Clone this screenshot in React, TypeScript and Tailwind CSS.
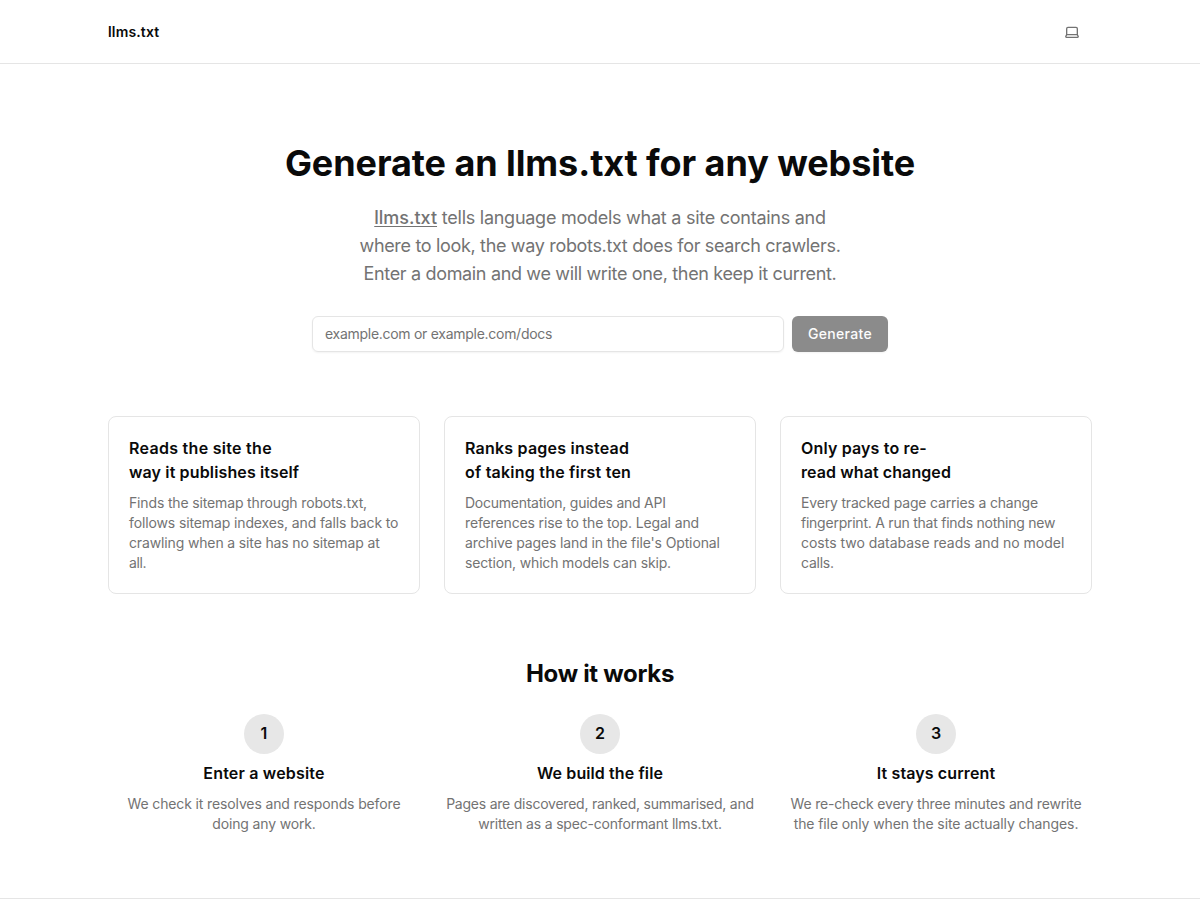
import { Laptop } from 'lucide-react'

const features = [
  {
    title: [
      { text: 'Reads the site the', className: 'tracking-[0.29px]' },
      { text: 'way it publishes itself', className: 'tracking-[0.14px]' },
    ],
    body: [
      { text: 'Finds the sitemap through robots.txt,', className: 'tracking-[-0.15px]' },
      { text: 'follows sitemap indexes, and falls back to', className: 'tracking-[-0.12px]' },
      { text: 'crawling when a site has no sitemap at', className: 'tracking-[-0.14px]' },
      { text: 'all.', className: 'tracking-[-0.4px]' },
    ],
  },
  {
    title: [
      { text: 'Ranks pages instead', className: 'tracking-[0.22px]' },
      { text: 'of taking the first ten', className: 'tracking-[0.22px]' },
    ],
    body: [
      { text: 'Documentation, guides and API', className: 'tracking-[-0.25px]' },
      { text: 'references rise to the top. Legal and', className: 'tracking-[-0.14px]' },
      { text: "archive pages land in the file's Optional", className: 'tracking-[-0.13px]' },
      { text: 'section, which models can skip.', className: 'tracking-[-0.16px]' },
    ],
  },
  {
    title: [
      { text: 'Only pays to re-', className: 'tracking-[0.16px]' },
      { text: 'read what changed', className: 'tracking-[0.09px]' },
    ],
    body: [
      { text: 'Every tracked page carries a change', className: 'tracking-[-0.18px]' },
      { text: 'fingerprint. A run that finds nothing new', className: 'tracking-[-0.24px]' },
      { text: 'costs two database reads and no model', className: 'tracking-[-0.02px]' },
      { text: 'calls.', className: 'tracking-[-0.25px]' },
    ],
  },
]

const steps = [
  {
    title: { text: 'Enter a website', className: 'tracking-[0.18px]' },
    body: [
      { text: 'We check it resolves and responds before', className: 'tracking-[-0.13px]' },
      { text: 'doing any work.', className: 'tracking-[-0.15px]' },
    ],
  },
  {
    title: { text: 'We build the file', className: 'tracking-[0.1px]' },
    body: [
      { text: 'Pages are discovered, ranked, summarised, and', className: 'tracking-[-0.23px]' },
      { text: 'written as a spec-conformant llms.txt.', className: 'tracking-[-0.19px]' },
    ],
  },
  {
    title: { text: 'It stays current', className: 'tracking-[0.12px]' },
    body: [
      { text: 'We re-check every three minutes and rewrite', className: 'tracking-[-0.18px]' },
      { text: 'the file only when the site actually changes.', className: 'tracking-[-0.1px]' },
    ],
  },
]

type Line = { text: string; className: string }

function Lines({ lines }: { lines: Line[] }) {
  return (
    <>
      {lines.map((line) => (
        <span key={line.text} className={`block whitespace-nowrap ${line.className}`}>
          {line.text}
        </span>
      ))}
    </>
  )
}

export default function App() {
  return (
    <div className="h-[900px] overflow-hidden bg-white font-['Inter',sans-serif] text-[#0a0a0a]">
      <header className="h-16 border-b border-[#e5e5e5]">
        <div className="mx-auto flex h-full max-w-[984px] items-center justify-between">
          <a href="#" className="text-sm font-semibold tracking-[0.15px]">
            llms.txt
          </a>
          <button className="flex h-8 w-10 items-center justify-center text-[#737373]">
            <Laptop size={16} />
          </button>
        </div>
      </header>

      <main className="mx-auto max-w-[984px] pt-20 pb-16">
        <section className="flex flex-col items-center text-center">
          <h1 className="-mt-px text-4xl font-bold tracking-[-0.08px] whitespace-nowrap">
            Generate an llms.txt for any website
          </h1>
          <p className="mt-[21px] text-lg leading-7 text-[#737373]">
            <span className="block tracking-[-0.26px] whitespace-nowrap">
              <a href="#" className="font-medium tracking-normal underline underline-offset-2">
                llms.txt
              </a>{' '}
              tells language models what a site contains and
            </span>
            <span className="block tracking-[-0.33px] whitespace-nowrap">
              where to look, the way robots.txt does for search crawlers.
            </span>
            <span className="block tracking-[-0.34px] whitespace-nowrap">
              Enter a domain and we will write one, then keep it current.
            </span>
          </p>
          <form className="mt-7 flex w-xl gap-2">
            <input
              className="h-9 min-w-0 flex-1 rounded-md border border-[#e5e5e5] px-3 pb-0.5 text-sm tracking-[-0.28px] shadow-xs placeholder:text-[#737373]"
              placeholder="example.com or example.com/docs"
            />
            <button
              type="button"
              className="h-9 w-24 rounded-md bg-[#8b8b8b] text-sm font-medium tracking-[0.3px] text-[#fcfcfc] shadow-xs"
            >
              Generate
            </button>
          </form>
        </section>

        <section className="mt-16 grid grid-cols-3 gap-6">
          {features.map((feature) => (
            <div key={feature.title[0].text} className="rounded-lg border border-[#e5e5e5] p-5">
              <h3 className="-mt-px font-semibold">
                <Lines lines={feature.title} />
              </h3>
              <p className="mt-[9px] text-sm text-[#737373]">
                <Lines lines={feature.body} />
              </p>
            </div>
          ))}
        </section>

        <section className="mt-16">
          <h2 className="text-center text-2xl font-bold tracking-[-0.3px]">How it works</h2>
          <div className="mt-6 grid grid-cols-3 gap-6">
            {steps.map((step, i) => (
              <div key={step.title.text} className="flex flex-col items-center text-center">
                <div className="flex size-10 items-center justify-center rounded-full bg-[#e7e7e7] pb-0.5 font-semibold">
                  {i + 1}
                </div>
                <h3 className="mt-[7px] font-semibold">
                  <Lines lines={[step.title]} />
                </h3>
                <p className="mt-[9px] text-sm text-[#737373]">
                  <Lines lines={step.body} />
                </p>
              </div>
            ))}
          </div>
        </section>
      </main>

      <footer className="border-t border-[#e5e5e5]" />
    </div>
  )
}
